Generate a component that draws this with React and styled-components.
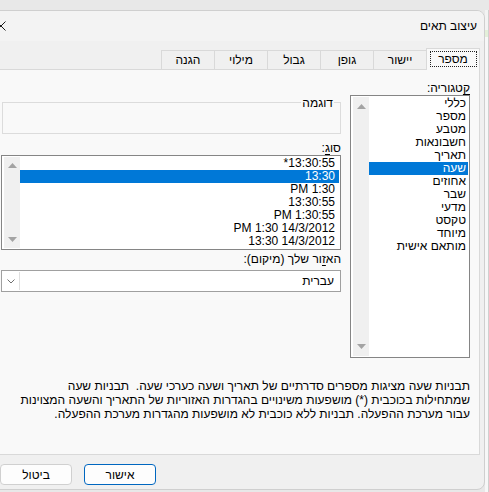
import React from 'react';
import styled, { createGlobalStyle } from 'styled-components';

const GlobalStyle = createGlobalStyle`
  html, body { margin: 0; padding: 0; }
  body {
    background: #e8e8e8;
    overflow: hidden;
    font-family: "Liberation Sans", "DejaVu Sans", sans-serif;
  }
`;

const Screen = styled.div`
  width: 489px;
  height: 492px;
  overflow: hidden;
  display: flex;
  align-items: flex-start;
  background: #e8e8e8;
`;

const Dialog = styled.div`
  flex: 0 0 503px;
  margin-left: -18px;
  margin-top: 10px;
  height: 480px;
  box-sizing: border-box;
  background: #f0f0f0;
  border: 1px solid #cfcfcf;
  border-radius: 8px;
  direction: rtl;
  display: flex;
  flex-direction: column;
  overflow: hidden;
  font-size: 12px;
  color: #000;
`;

const Excel = styled.div`
  flex: 1;
  align-self: stretch;
  margin-top: 10px;
  background: linear-gradient(to bottom, #f3f3f3 0 20px, #e3efd9 20px 27px, #f7f7f7 27px);
  border-right: 1px solid #d0d0d0;
`;

const TitleBar = styled.div`
  height: 30px;
  flex: none;
  background: #f3f3f3;
  display: flex;
  align-items: center;
  justify-content: space-between;
  padding-right: 7px;
`;

const Title = styled.div`
  line-height: 14px;
`;

const CloseButton = styled.div`
  width: 36px;
  height: 30px;
  display: flex;
  align-items: center;
  justify-content: center;
`;

const Body = styled.div`
  flex: 1;
  display: flex;
  flex-direction: column;
  padding: 7px 4px 0 6px;
`;

const TabRow = styled.div`
  display: flex;
  align-items: flex-end;
  height: 22px;
  position: relative;
  z-index: 1;
  margin-bottom: -1px;
`;

const Tab = styled.div`
  box-sizing: border-box;
  width: 54px;
  height: ${p => (p.$active ? 22 : 20)}px;
  margin-right: ${p => (p.$first ? 0 : -1)}px;
  background: ${p => (p.$active ? '#f9f9f9' : '#f0f0f0')};
  border: 1px solid #d9d9d9;
  border-bottom: ${p => (p.$active ? 'none' : '1px solid #d9d9d9')};
  display: flex;
  align-items: center;
  justify-content: center;
  line-height: 14px;
  padding-bottom: ${p => (p.$active ? 2 : 0)}px;
`;

const FocusRing = styled.span`
  box-sizing: border-box;
  width: 47px;
  height: 16px;
  border: 1px dotted #222;
  display: flex;
  align-items: center;
  justify-content: center;
`;

const Panel = styled.div`
  box-sizing: border-box;
  height: 386px;
  flex: none;
  background: #f9f9f9;
  border: 1px solid #d9d9d9;
  padding: 11px 9px 0 0;
  display: flex;
  flex-direction: column;
`;

const Columns = styled.div`
  display: flex;
  gap: 9px;
  align-items: flex-start;
`;

const CategoryCol = styled.div`
  flex: 0 0 120px;
  display: flex;
  flex-direction: column;
`;

const LeftCol = styled.div`
  flex: 0 0 340px;
  display: flex;
  flex-direction: column;
`;

const Label = styled.div`
  line-height: 14px;
  height: 14px;
  margin-top: ${p => p.$mt || 0}px;
  white-space: nowrap;
`;

const Key = styled.u`
  text-underline-offset: 2px;
`;

const ListBox = styled.div`
  box-sizing: border-box;
  height: ${p => p.$h}px;
  background: #fff;
  border: 1px solid #858585;
  padding: 1px 1px 1px 2px;
  display: flex;
  flex-direction: row-reverse;
  margin-top: ${p => p.$mt || 0}px;
`;

const ScrollBar = styled.div`
  flex: 0 0 16px;
  background: #f0f0f0;
  display: flex;
  flex-direction: column;
  justify-content: space-between;
  align-items: center;
  padding: ${p => p.$pad || 6}px 0;
  box-sizing: border-box;
`;

const Items = styled.div`
  flex: 1;
  display: flex;
  flex-direction: column;
`;

const Item = styled.div`
  height: 13px;
  line-height: 13px;
  padding-right: ${p => p.$pr || 2}px;
  white-space: nowrap;
  background: ${p => (p.$selected ? '#0078d7' : 'transparent')};
  color: ${p => (p.$selected ? '#fff' : '#000')};
`;

const Ltr = styled.span`
  direction: ltr;
  unicode-bidi: isolate;
`;

const GroupBox = styled.div`
  position: relative;
  box-sizing: border-box;
  height: 32px;
  margin: 21px 0 0 1px;
  border: 1px solid #dcdcdc;
`;

const GroupLabel = styled.span`
  position: absolute;
  top: -7px;
  right: 6px;
  padding: 0 1px;
  line-height: 14px;
  background: #f9f9f9;
`;

const Select = styled.div`
  box-sizing: border-box;
  height: 22px;
  margin-top: 4px;
  background: #fff;
  border: 1px solid #a0a0a0;
  display: flex;
  align-items: center;
  justify-content: space-between;
  padding-right: 6px;
`;

const SelectArrow = styled.div`
  width: 16px;
  height: 18px;
  border-right: 1px solid #e0e0e0;
  margin-left: 1px;
  display: flex;
  align-items: center;
  justify-content: center;
`;

const Description = styled.div`
  margin-top: 21px;
  line-height: 14px;
  white-space: pre;
`;

const ButtonRow = styled.div`
  display: flex;
  justify-content: flex-end;
  gap: 12px;
  margin-top: 9px;
  padding-left: 11px;
`;

const Button = styled.div`
  box-sizing: border-box;
  width: 72px;
  height: 21px;
  border-radius: 4px;
  background: #fdfdfd;
  border: 1px solid ${p => (p.$primary ? '#0067c0' : '#d0d0d0')};
  display: flex;
  align-items: center;
  justify-content: center;
  line-height: 14px;
`;

const ArrowUp = () => (
  <svg width="9" height="5" viewBox="0 0 9 5"><path d="M0 5 L4.5 0 L9 5 Z" fill="#a3a3a3" /></svg>
);
const ArrowDown = () => (
  <svg width="9" height="5" viewBox="0 0 9 5"><path d="M0 0 L4.5 5 L9 0 Z" fill="#a3a3a3" /></svg>
);

const categories = ['כללי', 'מספר', 'מטבע', 'חשבונאות', 'תאריך', 'שעה', 'אחוזים', 'שבר', 'מדעי', 'טקסט', 'מיוחד', 'מותאם אישית'];
const types = ['*13:30:55', '13:30', 'PM 1:30', '13:30:55', 'PM 1:30:55', 'PM 1:30 14/3/2012', '13:30 14/3/2012'];
const tabs = ['מספר', 'יישור', 'גופן', 'גבול', 'מילוי', 'הגנה'];

const descLines = [
  'תבניות שעה מציגות מספרים סדרתיים של תאריך ושעה כערכי שעה.  תבניות שעה',
  'שמתחילות בכוכבית (*) מושפעות משינויים בהגדרות האזוריות של התאריך והשעה המצוינות',
  'עבור מערכת ההפעלה. תבניות ללא כוכבית לא מושפעות מהגדרות מערכת ההפעלה.',
];

export default function App() {
  return (
    <>
      <GlobalStyle />
      <Screen>
        <Dialog>
          <TitleBar>
            <Title>עיצוב תאים</Title>
            <CloseButton>
              <svg width="10" height="10" viewBox="0 0 10 10">
                <path d="M0.5 0.5 L9.5 9.5 M9.5 0.5 L0.5 9.5" stroke="#1a1a1a" strokeWidth="1" />
              </svg>
            </CloseButton>
          </TitleBar>
          <Body>
            <TabRow>
              {tabs.map((t, i) => (
                <Tab key={t} $active={i === 0} $first={i === 0}>
                  {i === 0 ? <FocusRing>{t}</FocusRing> : t}
                </Tab>
              ))}
            </TabRow>
            <Panel>
              <Columns>
                <CategoryCol>
                  <Label><Key>ק</Key>טגוריה:</Label>
                  <ListBox $h={263}>
                    <ScrollBar $pad={7}>
                      <ArrowUp />
                      <ArrowDown />
                    </ScrollBar>
                    <Items>
                      {categories.map(c => (
                        <Item key={c} $selected={c === 'שעה'}>{c}</Item>
                      ))}
                    </Items>
                  </ListBox>
                </CategoryCol>
                <LeftCol>
                  <GroupBox>
                    <GroupLabel>דוגמה</GroupLabel>
                  </GroupBox>
                  <Label $mt={7}>סו<Key>ג</Key>:</Label>
                  <ListBox $h={95}>
                    <ScrollBar $pad={6}>
                      <ArrowUp />
                      <ArrowDown />
                    </ScrollBar>
                    <Items>
                      {types.map((t, i) => (
                        <Item key={t + i} $selected={i === 1} $pr={4}>
                          <Ltr>{t}</Ltr>
                        </Item>
                      ))}
                    </Items>
                  </ListBox>
                  <Label $mt={2}>הא<Key>ז</Key>ור שלך (מיקום):</Label>
                  <Select>
                    <span>עברית</span>
                    <SelectArrow>
                      <svg width="8" height="5" viewBox="0 0 8 5">
                        <path d="M0.5 0.5 L4 4 L7.5 0.5" stroke="#707070" strokeWidth="1" fill="none" />
                      </svg>
                    </SelectArrow>
                  </Select>
                </LeftCol>
              </Columns>
              <Description>{descLines.join('\n')}</Description>
            </Panel>
            <ButtonRow>
              <Button $primary>אישור</Button>
              <Button>ביטול</Button>
            </ButtonRow>
          </Body>
        </Dialog>
        <Excel />
      </Screen>
    </>
  );
}
